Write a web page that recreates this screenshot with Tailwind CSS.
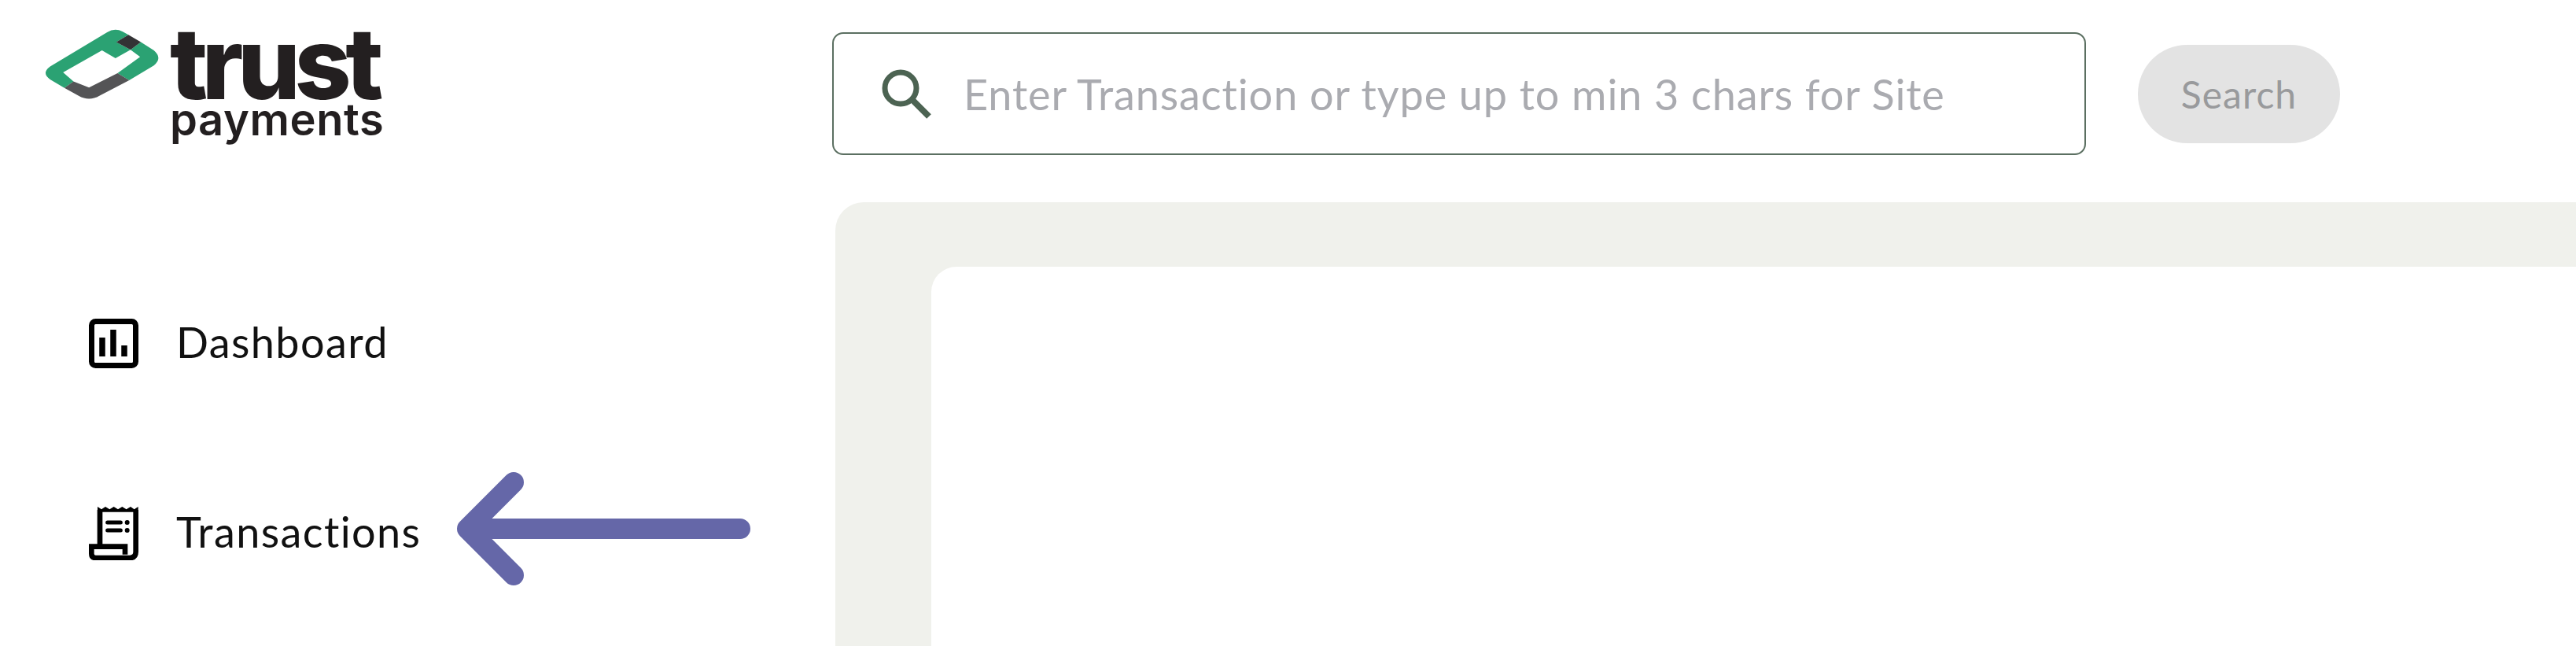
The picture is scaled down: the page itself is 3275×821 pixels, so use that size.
<!doctype html>
<html><head><meta charset="utf-8"><script src="https://cdn.jsdelivr.net/npm/@tailwindcss/browser@4"></script></head>
<body class="bg-white">
<div class="relative w-[3275px] h-[821px] overflow-hidden bg-white flex font-['Lato','Noto_Sans',sans-serif]">
  <aside class="w-[1058px] shrink-0 flex flex-col">
    <div class="h-[386px] pl-[57px] pt-[37px] flex items-start gap-[14px]">
      <svg class="w-[146px] h-[89px] shrink-0" viewBox="80 78 442 270">
        <path d="M155 305 L100 272 Q65 248 100 222 L320 90 Q350 72 380 88 L402 100 L355 128 L410 158 L352 190 L300 160 L150 245 L190 280Z" fill="#2ba273"/>
        <path d="M450 128 L500 160 Q535 190 500 218 L405 275 L360 248 L447 185 L410 158Z" fill="#2ba273"/>
        <path d="M355 128 L402 100 L450 128 L410 158Z" fill="#333335"/>
        <path d="M155 305 L190 280 L250 303 L360 248 L405 275 L290 335 Q250 358 210 335Z" fill="#545456"/>
      </svg>
      <div class="flex flex-col font-['Inter',sans-serif] text-[#231f20] -ml-[1px]">
        <span class="block text-[126px] leading-[87px] font-extrabold tracking-[-7.5px] h-[87px]">trust</span>
        <span class="block text-[56px] leading-[56px] font-semibold tracking-[0.6px]">payments</span>
      </div>
    </div>
    <nav class="pl-[113px] flex flex-col gap-[141px]">
      <a class="h-[100px] flex items-center gap-[48px] text-[54px] text-[#111] tracking-[1.4px]">
        <svg class="w-[63px] h-[63px] shrink-0" viewBox="0 0 63 63" fill="none" stroke="#000">
          <rect x="3.5" y="3.5" width="56" height="56" rx="5" stroke-width="7"/>
          <path d="M17 24V48M31 14V48M45 34V48" stroke-width="7.5"/>
        </svg>
        <span class="pb-[3px]">Dashboard</span>
      </a>
      <a class="h-[100px] flex items-center gap-[46px] text-[54px] text-[#111] tracking-[1.4px]">
        <svg class="w-[63px] h-[69px] shrink-0 mr-[2px]" viewBox="100 815 187 207" fill="none" stroke="#000" stroke-width="20">
          <path d="M132 838V818L147 828L162 818L178 828L194 818L210 828L226 818L242 828L258 818L272 828L287 818V838Z" fill="#000" stroke="none"/>
          <path d="M141 830V968M278 830V990Q278 1013 255 1013H125Q109 1013 109 997V970H237V1000"/>
          <path d="M170 878H220M170 908H220" stroke-width="15" stroke-linecap="round"/>
          <circle cx="245" cy="878" r="9" fill="#000" stroke="none"/>
          <circle cx="245" cy="908" r="9" fill="#000" stroke="none"/>
        </svg>
        <span class="pb-[3px]">Transactions</span>
      </a>
    </nav>
  </aside>
  <main class="flex-1 flex flex-col min-w-0">
    <header class="h-[257px] pt-[41px] flex items-start gap-[66px] shrink-0">
      <label class="w-[1594px] h-[156px] shrink-0 border-2 border-[#5b6f61] rounded-[14px] flex items-center pl-[59px] gap-[40px]">
        <svg class="w-[66px] h-[66px] shrink-0" viewBox="0 0 66 66" fill="none" stroke="#4c6352" stroke-width="7">
          <circle cx="26" cy="26" r="20"/>
          <path d="M40 40L62 62" stroke-width="8"/>
        </svg>
        <input class="flex-1 min-w-0 outline-none bg-transparent text-[54px] tracking-[0.9px] placeholder:text-[#aaabb0]" placeholder="Enter Transaction or type up to min 3 chars for Site">
      </label>
      <button class="mt-[16px] w-[257px] h-[125px] rounded-full bg-[#e3e3e3] text-[#999a9c] text-[48px] tracking-[1px]">Search</button>
    </header>
    <section class="ml-[4px] flex-1 bg-[#f0f1ec] rounded-tl-[36px] pt-[82px] pl-[122px]">
      <div class="h-full bg-white rounded-tl-[32px]"></div>
    </section>
  </main>
  <svg class="absolute left-[568px] top-[587px] w-[400px] h-[170px]" viewBox="568 587 400 170" fill="none" stroke="#6567a8" stroke-width="26" stroke-linecap="round" stroke-linejoin="round">
    <path d="M941 672H594M653 613L594 672L653 731"/>
  </svg>
</div>
</body></html>
